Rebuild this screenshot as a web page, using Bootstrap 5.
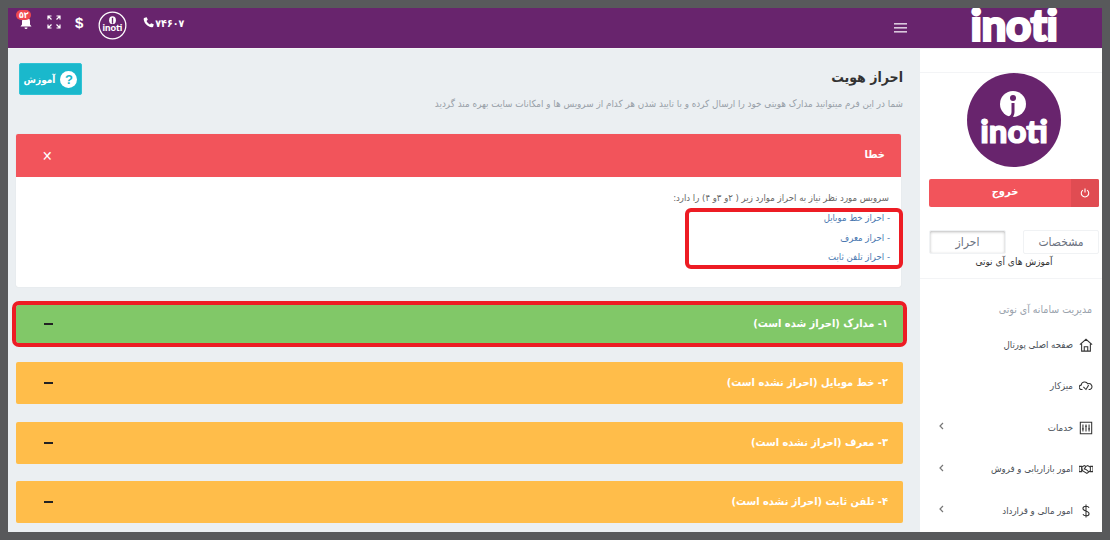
<!DOCTYPE html>
<html lang="fa" dir="rtl">
<head>
    <meta charset="UTF-8">
    <meta name="viewport" content="width=device-width, initial-scale=1.0">
    <title>احراز هویت</title>
    <link href="https://cdn.jsdelivr.net/npm/bootstrap@5.3.0/dist/css/bootstrap.min.css" rel="stylesheet">
    <style>
        html, body { height: 540px; overflow: hidden; }
        body { background: #58595b; padding: 8px; font-family: "DejaVu Sans Condensed", "DejaVu Sans", sans-serif; font-size: 10px; color: #4c5667; }
        .shell { width: 1094px; height: 524px; overflow: hidden; background: #ebeff2; }
        .topbar { height: 41px; background: #68246d; border-bottom: 1px solid #f4f4f6; padding: 0; flex-wrap: nowrap; }
        .brand-box { width: 182px; height: 40px; padding-left: 6px; }
        .brand-word { font-family: "Lato", sans-serif; font-weight: 900; font-size: 44px; line-height: 32px; letter-spacing: -.5px; color: #fff; -webkit-text-stroke: 2.2px #fff; direction: ltr; }
        .burger { width: 13px; margin-right: 13px; fill: #d9c8dc; }
        .top-tools { margin-left: 11px; padding-bottom: 12px; direction: ltr; color: #fff; }
        .phone-box { margin: 4px 0 0 16px; }
        .phone-num { font-size: 10.5px; font-weight: 700; direction: rtl; }
        .bell-wrap { width: 14px; height: 14px; }
        .bell-count { top: -5px; left: -3px; background: #f0484f; font-size: 8.5px; font-weight: 700; line-height: 10px; padding: 0 3px; border-radius: 5px; color: #fff; }

        .side-panel { width: 182px; flex: none; background: #fff; height: 483px; padding-top: 23px; }
        .side-inner { border-top: 1px solid #f3f4f6; padding-left: 6px; }
        .logout-btn { margin: 12px 3px 0 3px; height: 28px; background: #f2545b; border-radius: 2px; color: #fff; font-size: 11px; font-weight: 700; }
        .logout-icon { width: 28px; background: #e04c52; border-radius: 0 2px 2px 0; }
        .logout-text { padding-left: 10px; line-height: 26px; }
        .side-tabs { margin: 23px 3px 0 3px; gap: 17px; }
        .side-tab { width: 76px; height: 24px; border: 1px solid #f0f2f4; border-radius: 2px; font-size: 12px; color: #6b7280; line-height: 22px; text-align: center; }
        .side-tab-on { width: 77px; box-shadow: inset 0 1px 3px #bbb; }
        .side-hint { font-size: 10px; color: #333; text-align: center; margin: 1px 0 0 -6px; padding: 0 0 9px 6px; border-bottom: 1px solid #f3f4f6; line-height: 14px; }
        .menu-title { font-size: 10.5px; color: #9aa3ad; padding: 23px 10px 0 0; line-height: 14px; }
        .side-menu { padding: 0; margin: 0 0 0 -6px; list-style: none; }
        .side-menu li { height: 41.5px; padding: 0 9px 0 6px; font-size: 9.6px; color: #4a4f57; gap: 6px; }
        .side-menu li:first-child { margin-top: 8px; }
        .menu-ico { width: 14px; height: 14px; flex: none; stroke: #333; fill: none; stroke-width: 1.2; }
        .menu-chev { margin-right: auto; width: 8px; height: 8px; stroke: #777; fill: none; stroke-width: 1.2; margin-left: 12px; margin-top: -3px; }

        .main-area { padding: 0 17px 0 8px; min-width: 0; }
        .page-head { height: 85px; }
        .page-title { font-size: 14px; font-weight: 700; color: #333; margin: 0; padding-top: 18px; line-height: 20px; }
        .page-sub { font-size: 9.8px; color: #98a0a8; margin: 10px 0 0; line-height: 14px; white-space: nowrap; }
        .help-btn { width: 63px; height: 32px; margin: 14px 0 0 3px; background: #1ab8cc; border: 1px solid #2fc3d5; border-radius: 2px; color: #fff; font-size: 10px; font-weight: 700; padding: 0; gap: 5px; flex: none; }
        .help-dot { width: 17px; height: 17px; border-radius: 50%; background: #fff; color: #1ab8cc; font: 700 13px/17px "Liberation Sans", sans-serif; text-align: center; }
        .err-card { margin: 0 2px 0 0; border: 0; border-radius: 2px; height: 153px; box-shadow: 0 0 1px rgba(0,0,0,.15); }
        .err-head { height: 43px; background: #f2545b; border: 0; border-radius: 2px 2px 0 0 !important; color: #fff; font-size: 11px; font-weight: 700; padding: 0 16px 0 0; }
        .err-x { margin-left: 26px; font-size: 14px; font-weight: 400; line-height: 1; }
        .err-body { padding: 14px 12px 0 0; font-size: 9.5px; line-height: 14px; color: #666; }
        .mark-box { width: 218px; height: 61px; margin: 3px -14px 0 0; border: 4px solid #ed1c24; border-radius: 6px; padding: 0 9px 0 0; color: #4a78b0; }
        .mark-box div { line-height: 19.5px; }
        .mark-box div:first-child { margin-top: -4px; }
        .step-bar { height: 42px; border: 0; border-radius: 2px; margin-top: 18px; padding: 0 15px 0 0; color: #fff; font-size: 11px; font-weight: 700; background: #ffbd4a; }
        .step-done { height: 38px; margin-bottom: 19px; background: #81c868; outline: 4px solid #ed1c24; border-radius: 3px; }
        .step-last { margin-top: 17px; }
        .step-minus { margin-left: 28px; width: 9px; height: 2px; background: #222; }
    </style>
</head>
<body>
    <div class="shell d-flex flex-column">
        <nav class="navbar topbar">
            <div class="brand-box d-flex justify-content-center align-items-start">
                <span class="brand-word">inoti</span>
            </div>
            <svg class="burger" viewBox="0 0 13 10"><rect y="0" width="13" height="1.6"/><rect y="4" width="13" height="1.6"/><rect y="8" width="13" height="1.6"/></svg>
            <div class="top-tools d-flex align-items-center me-auto">
                <div class="bell-wrap position-relative">
                    <svg viewBox="0 0 14 14" width="14" height="14" fill="#fff"><path d="M7 1.5a4 4 0 0 0-4 4v3L1.5 10.5h11L11 8.500v-3a4 4 0 0 0-4-4zM5.500 11.500a1.500 1.500 0 0 0 3 0z"/></svg>
                    <span class="bell-count position-absolute">۵۳</span>
                </div>
                <svg style="margin-left:14px" viewBox="0 0 14 14" width="14" height="14" fill="none" stroke="#fff" stroke-width="1.200"><path d="M1 4.500V1h3.500M1 1l3.500 3.500M13 4.500V1H9.500M13 1L9.500 4.500M1 9.500V13h3.500M1 13l3.500-3.500M13 9.500V13H9.500M13 13L9.500 9.500"/></svg>
                <span style="margin-left:14px;font:700 15px/1 'Liberation Sans',sans-serif">$</span>
                <svg style="margin:6px 0 0 15px" viewBox="0 0 30 30" width="29" height="29"><circle cx="15" cy="15" r="13.800" fill="none" stroke="#fff" stroke-width="1.300"/><ellipse cx="15" cy="9.500" rx="3.500" ry="4" fill="#fff"/><rect x="14.300" y="7" width="1.400" height="6" fill="#68246d"/><text x="15" y="21" text-anchor="middle" fill="#fff" font-family="Lato" font-weight="900" font-size="10">inoti</text></svg>
                <span class="phone-box d-flex align-items-center">
                    <svg viewBox="0 0 14 14" width="12" height="12" fill="#fff" style="margin-top:-3px"><path d="M2 .8 4.300.3l1.300 3-1.500 1.300c.8 1.800 2.200 3.200 4 4.100l1.300-1.500 3.100 1.300-.5 2.300c-.2.800-1 1.300-1.800 1.200C5 11.400 1.500 7.500.8 2.700.7 1.800 1.200 1 2 .8z"/></svg>
                    <span class="phone-num">۷۴۶۰۷</span>
                </span>
            </div>
        </nav>
        <div class="d-flex flex-grow-1">
            <aside class="side-panel">
                <div class="side-inner">
                    <div class="d-flex justify-content-center">
                        <svg viewBox="0 0 94 94" width="94" height="94"><circle cx="47" cy="47" r="47" fill="#68246d"/><circle cx="46" cy="31" r="13" fill="#fff"/><circle cx="46" cy="25" r="3" fill="#68246d"/><path d="M46 30v9c0 3-1.500 5-4 6" fill="none" stroke="#68246d" stroke-width="3"/><text x="47" y="70" text-anchor="middle" fill="#fff" stroke="#fff" stroke-width="1.200" font-family="Lato" font-weight="900" font-size="33">inoti</text></svg>
                    </div>
                    <div class="logout-btn d-flex">
                        <div class="logout-icon d-flex align-items-center justify-content-center">
                            <svg viewBox="0 0 12 12" width="10" height="10" fill="none" stroke="#fff" stroke-width="1.300"><path d="M3.500 2.500a4.500 4.500 0 1 0 5 0M6 .5v5"/></svg>
                        </div>
                        <div class="logout-text flex-grow-1 text-center">خروج</div>
                    </div>
                    <div class="side-tabs d-flex">
                        <div class="side-tab">مشخصات</div>
                        <div class="side-tab side-tab-on">احراز</div>
                    </div>
                    <div class="side-hint">آموزش های آی نوتی</div>
                    <div class="menu-title">مدیریت سامانه آی نوتی</div>
                    <ul class="side-menu">
                        <li class="d-flex align-items-center">
                            <svg class="menu-ico" viewBox="0 0 16 16"><path d="M1 7.500 8 1.500l7 6M3 6.500V15h10V6.500M6 15v-5h4v5"/></svg>
                            <span>صفحه اصلی پورتال</span>
                        </li>
                        <li class="d-flex align-items-center">
                            <svg class="menu-ico" viewBox="0 0 16 16"><path d="M4 12H3a2.500 2.500 0 0 1-.5-5A4 4 0 0 1 10 5.500 3.300 3.300 0 0 1 12.500 12H11M5 9l3 3 3-5"/></svg>
                            <span>میزکار</span>
                        </li>
                        <li class="d-flex align-items-center">
                            <svg class="menu-ico" viewBox="0 0 16 16"><path d="M1.500 1.500h13v13h-13zM4.500 4v8M8 4v8M11.500 4v8M3.500 9h2M7 6h2M10.500 9h2"/></svg>
                            <span>خدمات</span>
                            <svg class="menu-chev" viewBox="0 0 8 8"><path d="M5 1 2 4l3 3"/></svg>
                        </li>
                        <li class="d-flex align-items-center">
                            <svg class="menu-ico" viewBox="0 0 16 16"><path d="M0 5h3v6H0zM16 5h-3v6h3zM3 6l3-2 2 1 2-1 3 2v4l-4 3-5-3zM8 5 6 8l2 .5 3 2.500"/></svg>
                            <span>امور بازاریابی و فروش</span>
                            <svg class="menu-chev" viewBox="0 0 8 8"><path d="M5 1 2 4l3 3"/></svg>
                        </li>
                        <li class="d-flex align-items-center">
                            <svg class="menu-ico" viewBox="0 0 16 16"><path d="M11.500 4.500C11 3 9.500 2.500 8 2.500 6 2.500 4.500 3.500 4.500 5c0 3.500 7 2.500 7 6 0 1.500-1.500 2.500-3.500 2.500-1.500 0-3-.5-3.500-2M8 .5v15"/></svg>
                            <span>امور مالی و قرارداد</span>
                            <svg class="menu-chev" viewBox="0 0 8 8"><path d="M5 1 2 4l3 3"/></svg>
                        </li>
                    </ul>
                </div>
            </aside>
            <main class="main-area flex-grow-1">
                <div class="page-head d-flex justify-content-between align-items-start">
                    <div>
                        <h1 class="page-title">احراز هویت</h1>
                        <p class="page-sub">شما در این فرم میتوانید مدارک هویتی خود را ارسال کرده و با تایید شدن هر کدام از سرویس ها و امکانات سایت بهره مند گردید</p>
                    </div>
                    <button type="button" class="btn help-btn d-flex align-items-center justify-content-center">
                        <span class="help-dot">?</span>
                        <span>آموزش</span>
                    </button>
                </div>
                <div class="card err-card">
                    <div class="card-header err-head d-flex align-items-center justify-content-between">
                        <span>خطا</span>
                        <span class="err-x">✕</span>
                    </div>
                    <div class="card-body err-body">
                        <div>سرویس مورد نظر نیاز به احراز موارد زیر ( ۲و ۳و ۴) را دارد:</div>
                        <div class="mark-box">
                            <div>- احراز خط موبایل</div>
                            <div>- احراز معرف</div>
                            <div>- احراز تلفن ثابت</div>
                        </div>
                    </div>
                </div>
                <div class="step-bar step-done d-flex align-items-center justify-content-between">
                    <span>۱- مدارک (احراز شده است)</span>
                    <span class="step-minus"></span>
                </div>
                <div class="step-bar d-flex align-items-center justify-content-between">
                    <span>۲- خط موبایل (احراز نشده است)</span>
                    <span class="step-minus"></span>
                </div>
                <div class="step-bar d-flex align-items-center justify-content-between">
                    <span>۳- معرف (احراز نشده است)</span>
                    <span class="step-minus"></span>
                </div>
                <div class="step-bar step-last d-flex align-items-center justify-content-between">
                    <span>۴- تلفن ثابت (احراز نشده است)</span>
                    <span class="step-minus"></span>
                </div>
            </main>
        </div>
    </div>
    <script src="https://cdn.jsdelivr.net/npm/bootstrap@5.3.0/dist/js/bootstrap.bundle.min.js"></script>
</body>
</html>
